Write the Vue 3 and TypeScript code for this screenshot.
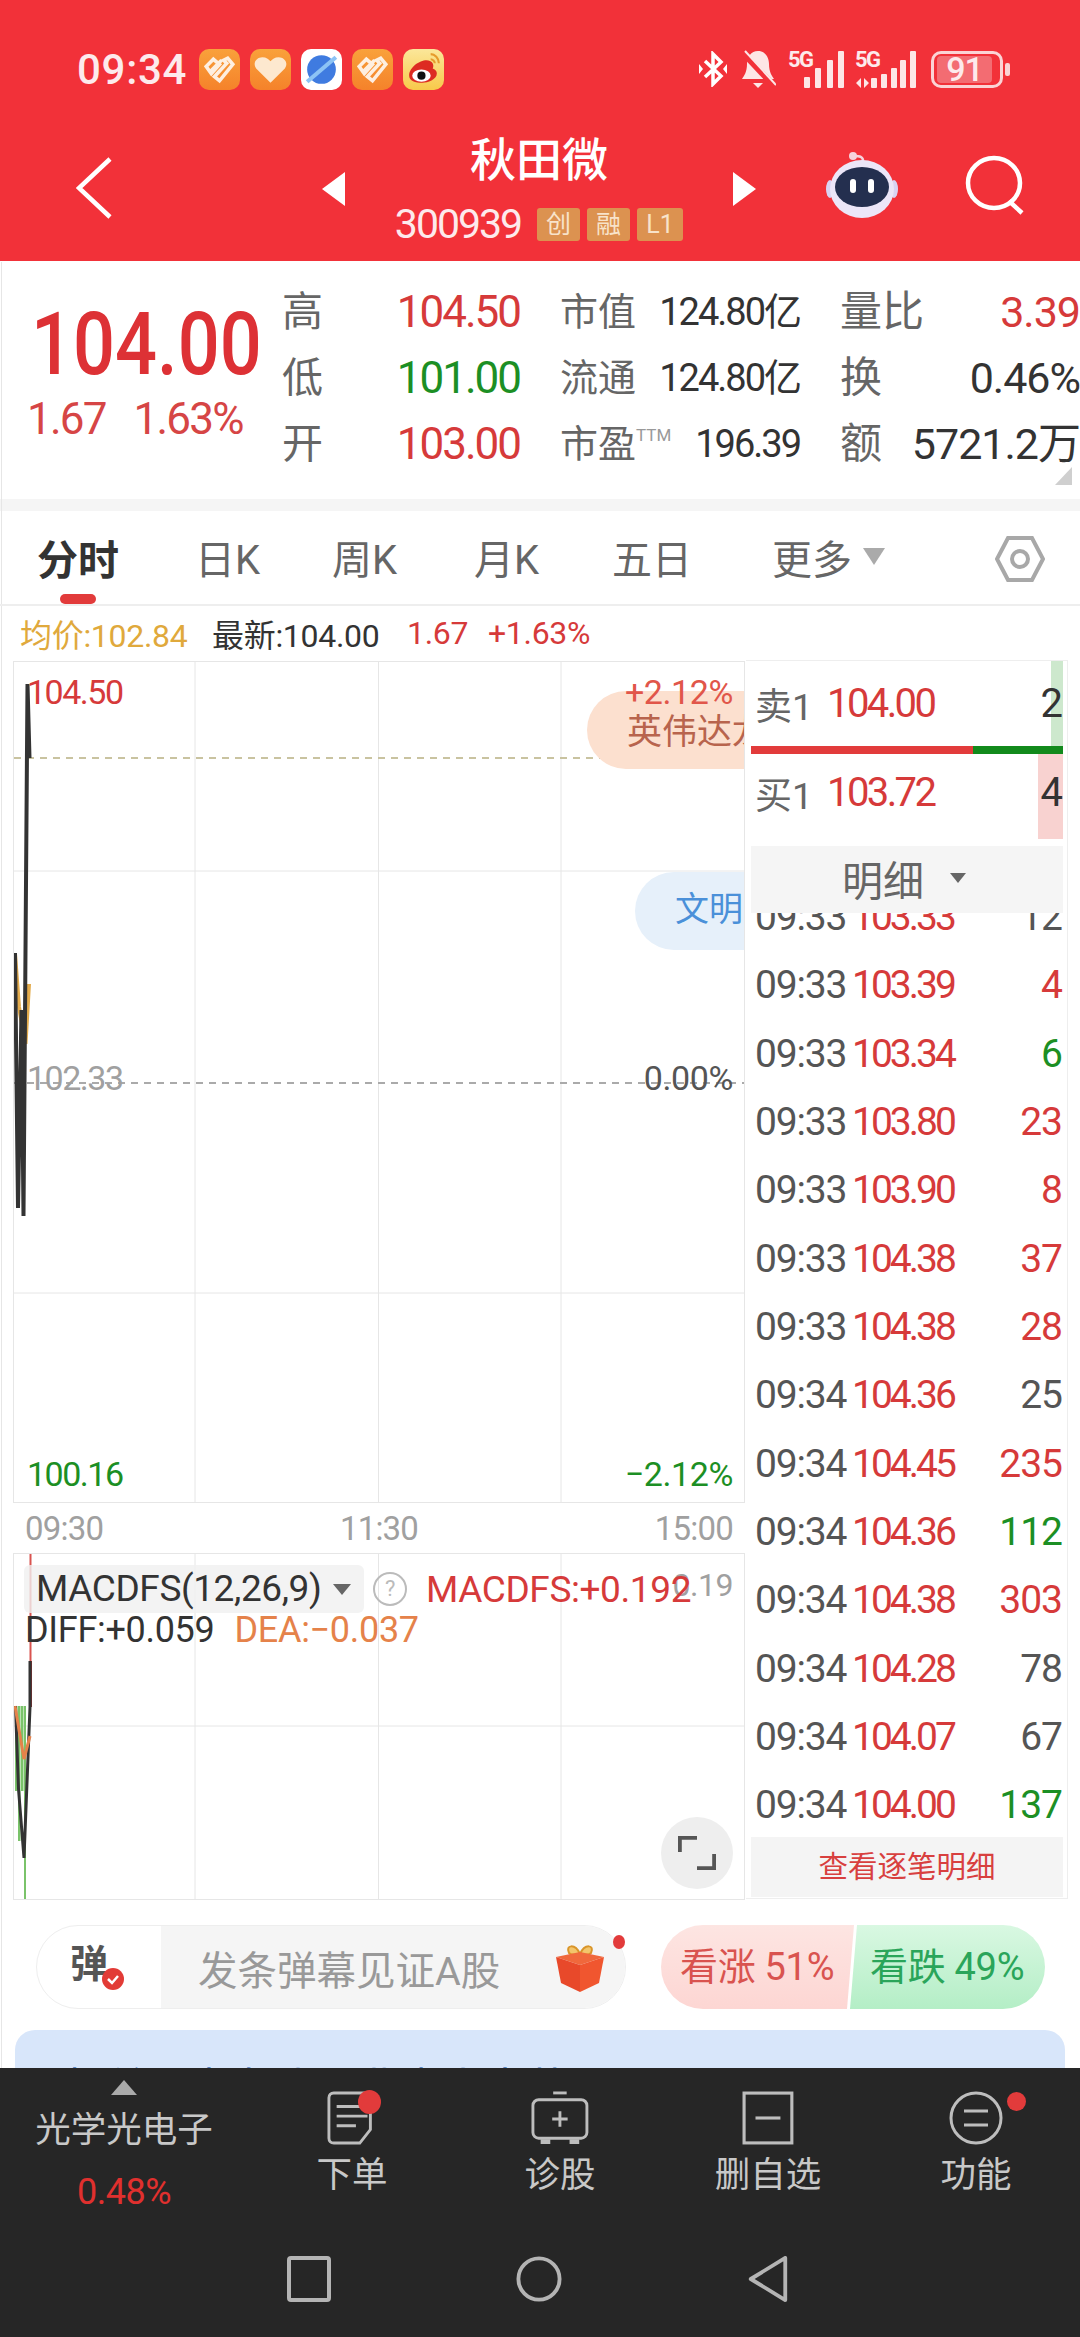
<template>
  <div class="page">
    <header class="head">
      <div class="status">
        <span class="clock">09:34</span>
        <div class="notif">
          <span v-for="(n, i) in notifs" :key="i" class="app" :class="n">
            <svg v-if="n === 'heart1'" viewBox="0 0 40 40"><path d="M7 17 14 10l6 5-8 9zM15 27l12-13-3-3 4-2 5 6-13 16zM12 21l10-10" fill="none" stroke="#fff" stroke-width="3.5" opacity=".85" /></svg>
            <svg v-else-if="n === 'heart2'" viewBox="0 0 40 40"><path d="M20 33 6 19c-4-6 1-11 6-11 4 0 6 2 8 4 2-2 4-4 8-4 5 0 10 5 6 11z" fill="#fde8cf" /></svg>
            <svg v-else-if="n === 'planet'" viewBox="0 0 40 40"><circle cx="20" cy="20" r="14" fill="#3f7be0" /><path d="M6 32 34 8" stroke="#8cc3f5" stroke-width="4" /></svg>
            <svg v-else viewBox="0 0 40 40"><path d="M6 26c0-8 10-15 17-15 5 0 8 4 6 8 3 1 4 3 4 5 0 6-9 9-14 9-7 0-13-2-13-7z" fill="#dd2b22" /><ellipse cx="18" cy="26" rx="9" ry="6" fill="#fff" /><circle cx="18" cy="26" r="4" fill="#111" /><path d="M27 5c4 0 8 4 8 9M27 10c2 0 4 2 4 4" fill="none" stroke="#e69b2c" stroke-width="2" /></svg>
          </span>
        </div>
        <div class="sys">
          <svg class="bt" viewBox="0 0 30 36"><path d="M7 10 23 25 15 33V3l8 8L7 26" fill="none" stroke="#fff" stroke-width="3.5" /><path d="M1 13l4 5-4 5zM29 13l-4 5 4 5z" fill="#fff" /></svg>
          <svg class="bell" viewBox="0 0 36 40"><path d="M18 2c-7 0-11 6-11 13 0 8-3 12-5 15h32c-2-3-5-7-5-15 0-7-4-13-11-13z" fill="#fde6e6" /><path d="M13 34h10l-5 5z" fill="#fde6e6" /><path d="M2 3 34 37" stroke="#f23139" stroke-width="6" /><path d="M5 2 36 36" stroke="#fde6e6" stroke-width="2" /></svg>
          <div class="sig">
            <span class="five">5G</span>
            <i v-for="h in [11, 20, 28, 37]" :key="h" class="bar" :style="{ height: h + 'px' }"></i>
          </div>
          <div class="sig sig2">
            <span class="five">5G</span>
            <svg class="arrows" viewBox="0 0 15 10"><path d="M6 0v10L1 5zM9 0v10l5-5z" fill="#fde6e6" /></svg>
            <i v-for="h in [10, 14, 20, 28, 37]" :key="h" class="bar" :style="{ height: h + 'px' }"></i>
          </div>
          <div class="batt"><span class="batt-in">91</span></div>
          <i class="nub"></i>
        </div>
      </div>
      <div class="nav">
        <svg class="back" viewBox="0 0 36 62"><path d="M34 2 3 31l31 29" fill="none" stroke="#fff" stroke-width="4.5" /></svg>
        <div class="stock">
          <i class="tri-l"></i>
          <div class="stock-mid">
            <div class="name">秋田微</div>
            <div class="code-line">
              <span class="code">300939</span>
              <span class="tag">创</span>
              <span class="tag">融</span>
              <span class="tag wide">L1</span>
            </div>
          </div>
          <i class="tri-r"></i>
        </div>
        <svg class="robot" viewBox="0 0 72 68"><path d="M37 12C38 5 33 5 28 5" fill="none" stroke="#f6d3dc" stroke-width="2.5" /><circle cx="27" cy="5" r="4" fill="#f6d3dc" /><ellipse cx="4" cy="38" rx="4" ry="9" fill="#d9d3f2" /><ellipse cx="68" cy="38" rx="4" ry="9" fill="#d9d3f2" /><ellipse cx="36" cy="38" rx="32" ry="29" fill="#ece6f8" /><ellipse cx="36" cy="36" rx="27" ry="20" fill="#242f4f" /><rect x="24" y="28" width="6" height="14" rx="3" fill="#fff" /><rect x="42" y="28" width="6" height="14" rx="3" fill="#fff" /></svg>
        <svg class="search" viewBox="0 0 60 60"><ellipse cx="29" cy="28" rx="26" ry="25" fill="none" stroke="#fff" stroke-width="4.5" /><path d="M44 46 57 58" stroke="#fff" stroke-width="4.5" /></svg>
      </div>
    </header>

    <section class="quote">
      <div class="price-box">
        <div class="big">104.00</div>
        <div class="chg"><span>1.67</span><span>1.63%</span></div>
      </div>
      <div class="stats">
        <template v-for="s in stats" :key="s.l1">
          <span class="lab">{{ s.l1 }}</span>
          <span class="val" :class="s.c1">{{ s.v1 }}</span>
          <span class="lab lab2">{{ s.l2 }}<sup v-if="s.sup">TTM</sup></span>
          <span class="val v2">{{ s.v2 }}</span>
          <span class="lab lab3">{{ s.l3 }}</span>
          <span class="val v3" :class="s.c3">{{ s.v3 }}</span>
        </template>
      </div>
      <i class="corner"></i>
    </section>
    <div class="band"></div>

    <nav class="tabs">
      <div v-for="t in tabs" :key="t.label" class="tab" :class="{ on: t.on }" :style="{ width: t.w + 'px' }">
        {{ t.label }}<i v-if="t.more" class="more"></i>
      </div>
      <svg class="hex" viewBox="0 0 50 46"><path d="M13 2h24l11 21-11 21H13L2 23z" fill="none" stroke="#a8a8a8" stroke-width="4" /><circle cx="25" cy="23" r="8" fill="none" stroke="#a8a8a8" stroke-width="4" /></svg>
    </nav>

    <div class="info">
      <span class="gold">均价:102.84</span>
      <span class="dark">最新:104.00</span>
      <span class="red">1.67</span>
      <span class="red">+1.63%</span>
    </div>

    <div class="market">
      <div class="charts">
        <div class="main-chart">
          <svg class="plot" viewBox="0 0 730 840">
            <path d="M181 0v840M364.500 0v840M547 0v840M0 209h730M0 631h730" stroke="#e6e6e6" stroke-width="1" fill="none" />
            <path d="M0 96h730" stroke="#c9c3a0" stroke-width="2" stroke-dasharray="7 6" fill="none" />
            <path d="M0 421h730" stroke="#aaa" stroke-width="2" stroke-dasharray="7 6" fill="none" />
            <path d="M1 292 5 345 11.500 382 15 322" stroke="#e3ab4c" stroke-width="4" fill="none" />
            <path d="M1 291 4 546 7.500 348 9.500 554 13.500 22 15.500 96" stroke="#333" stroke-width="4" fill="none" />
          </svg>
          <span class="pill orange">英伟达龙</span>
          <span class="pill blue">文明</span>
          <span class="lbl l-top red">104.50</span>
          <span class="lbl pct r-top">+2.12%</span>
          <span class="lbl l-mid grey">102.33</span>
          <span class="lbl pct r-mid dim">0.00%</span>
          <span class="lbl l-bot green">100.16</span>
          <span class="lbl pct r-bot green">−2.12%</span>
        </div>
        <div class="axis"><span>09:30</span><span>11:30</span><span>15:00</span></div>
        <div class="macd">
          <svg class="plot" viewBox="0 0 730 345">
            <path d="M181 0v345M364.500 0v345M547 0v345M0 172h730" stroke="#e6e6e6" stroke-width="1" fill="none" />
            <path d="M16.500 0v107" stroke="#d9534f" stroke-width="2" fill="none" />
            <path d="M16.500 107v46" stroke="#8a2c2c" stroke-width="3" fill="none" />
            <path d="M1 152h2.500v85H1zM4 152h2.500v135H4zM7 152h2.500v85H7zM10 152h2v193h-2z" fill="#7ac36a" />
            <path d="M16 107v46L10 304 4.500 235 1.500 152" stroke="#333" stroke-width="3" fill="none" />
            <path d="M1 152 10 205 16 182" stroke="#e5824a" stroke-width="3" fill="none" />
          </svg>
          <span class="lbl m-19 grey">0.19</span>
          <div class="macd-top">
            <div class="chip">MACDFS(12,26,9)<i class="chip-tri"></i></div>
            <span class="ques">?</span>
            <span class="m-red">MACDFS:+0.192</span>
          </div>
          <div class="macd-sub">
            <span>DIFF:+0.059</span>
            <span class="m-org">DEA:−0.037</span>
          </div>
          <button class="expand">
            <svg viewBox="0 0 40 40"><path d="M2 19V4h18M38 21v15H20" fill="none" stroke="#555" stroke-width="4" /></svg>
          </button>
        </div>
      </div>

      <aside class="side">
        <div class="book sell">
          <i class="vol vol-g"></i>
          <span class="bk-lab">卖1</span><span class="bk-price">104.00</span><span class="bk-qty">2</span>
        </div>
        <div class="split"><i class="split-r"></i><i class="split-g"></i></div>
        <div class="book buy">
          <i class="vol vol-r"></i>
          <span class="bk-lab">买1</span><span class="bk-price">103.72</span><span class="bk-qty">4</span>
        </div>
        <div class="detail">明细<i class="detail-tri"></i></div>
        <div class="ticks">
          <div class="ticks-in">
            <div v-for="(r, i) in ticks" :key="i" class="tick">
              <span class="t">{{ r.t }}</span>
              <span class="p">{{ r.p }}</span>
              <span class="q" :class="r.c">{{ r.q }}</span>
            </div>
          </div>
        </div>
        <div class="all">查看逐笔明细</div>
      </aside>
    </div>

    <div class="actions">
      <div class="barrage">
        <div class="bar-left">
          <span class="dan">弹</span>
          <svg class="check" viewBox="0 0 24 24"><circle cx="12" cy="12" r="11" fill="#e23b36" /><path d="M7 12l4 4 6-7" fill="none" stroke="#fff" stroke-width="2.500" /></svg>
        </div>
        <div class="bar-right">
          <span>发条弹幕见证A股</span>
          <svg class="gift" viewBox="0 0 50 50"><path d="M25 12C20 1 10 3 14 11c2 2 7 2 11 1zM25 12c5-11 15-9 11-1-2 2-7 2-11 1z" fill="#f3c56b" stroke="#d9952a" stroke-width="2" /><path d="M1 15 25 10l24 5-24 8z" fill="#f0683c" /><path d="M1 15l24 8v27L6 41z" fill="#e8492a" /><path d="M49 15 25 23v27l19-9z" fill="#f0562f" /></svg>
        </div>
        <i class="dot"></i>
      </div>
      <div class="vote">
        <div class="up">看涨 51%</div>
        <div class="down">看跌 49%</div>
      </div>
    </div>

    <div class="news">
      <div class="news-line">相关股为龙头，业内人士共识</div>
    </div>

    <footer class="dock">
      <div class="dock-row">
        <div class="sector">
          <i class="sec-up"></i>
          <div class="sec-name">光学光电子</div>
          <div class="sec-pct">0.48%</div>
        </div>
        <div class="dock-items">
          <div class="dock-item">
            <svg viewBox="0 0 52 56"><path d="M7 2h38v38L34 54H7c-3 0-5-2-5-5V7c0-3 2-5 5-5z" fill="none" stroke="#bdbdbd" stroke-width="3" /><path d="M10 16h26M10 26h32M10 36h20" stroke="#bdbdbd" stroke-width="3" /></svg>
            <i class="badge b1"></i>
            <span>下单</span>
          </div>
          <div class="dock-item">
            <svg viewBox="0 0 60 56"><path d="M23 2h14" stroke="#bdbdbd" stroke-width="3" /><rect x="2" y="9" width="56" height="40" rx="6" fill="none" stroke="#bdbdbd" stroke-width="3" /><path d="M30 21v16M22 29h16" stroke="#bdbdbd" stroke-width="3" /><path d="M10 50h10v5H10zM40 50h10v5H40z" fill="#bdbdbd" /></svg>
            <span>诊股</span>
          </div>
          <div class="dock-item">
            <svg viewBox="0 0 50 52"><rect x="2" y="2" width="46" height="48" fill="none" stroke="#bdbdbd" stroke-width="3" /><path d="M13 26h24" stroke="#bdbdbd" stroke-width="3" /></svg>
            <span>删自选</span>
          </div>
          <div class="dock-item">
            <svg viewBox="0 0 54 54"><ellipse cx="27" cy="27" rx="25" ry="25" fill="none" stroke="#bdbdbd" stroke-width="3" /><path d="M15 20h24M15 34h24" stroke="#bdbdbd" stroke-width="3" /></svg>
            <i class="badge b2"></i>
            <span>功能</span>
          </div>
        </div>
      </div>
      <div class="softkeys">
        <svg viewBox="0 0 44 46"><rect x="2" y="2" width="40" height="42" rx="2" fill="none" stroke="#b4b4b4" stroke-width="4" /></svg>
        <svg viewBox="0 0 48 48"><circle cx="24" cy="24" r="21.500" fill="none" stroke="#b4b4b4" stroke-width="4" /></svg>
        <svg viewBox="0 0 42 48"><path d="M39 2v44L3 24z" fill="none" stroke="#b4b4b4" stroke-width="4" stroke-linejoin="round" /></svg>
      </div>
    </footer>
  </div>
</template>

<script setup lang="ts">
const notifs = ['heart1', 'heart2', 'planet', 'heart1', 'weibo']

const stats = [
  { l1: '高', v1: '104.50', c1: 'red', l2: '市值', v2: '124.80亿', l3: '量比', v3: '3.39', c3: 'red', sup: false },
  { l1: '低', v1: '101.00', c1: 'green', l2: '流通', v2: '124.80亿', l3: '换', v3: '0.46%', c3: '', sup: false },
  { l1: '开', v1: '103.00', c1: 'red', l2: '市盈', v2: '196.39', l3: '额', v3: '5721.2万', c3: '', sup: true },
]

const tabs = [
  { label: '分时', w: 158, on: true },
  { label: '日K', w: 137 },
  { label: '周K', w: 142 },
  { label: '月K', w: 138 },
  { label: '五日', w: 160 },
  { label: '更多', w: 223, more: true },
]

const ticks = [
  { t: '09:33', p: '103.33', q: '12', c: '' },
  { t: '09:33', p: '103.39', q: '4', c: 'red' },
  { t: '09:33', p: '103.34', q: '6', c: 'green' },
  { t: '09:33', p: '103.80', q: '23', c: 'red' },
  { t: '09:33', p: '103.90', q: '8', c: 'red' },
  { t: '09:33', p: '104.38', q: '37', c: 'red' },
  { t: '09:33', p: '104.38', q: '28', c: 'red' },
  { t: '09:34', p: '104.36', q: '25', c: '' },
  { t: '09:34', p: '104.45', q: '235', c: 'red' },
  { t: '09:34', p: '104.36', q: '112', c: 'green' },
  { t: '09:34', p: '104.38', q: '303', c: 'red' },
  { t: '09:34', p: '104.28', q: '78', c: '' },
  { t: '09:34', p: '104.07', q: '67', c: '' },
  { t: '09:34', p: '104.00', q: '137', c: 'green' },
]
</script>

<style>
html,
body {
  margin: 0;
  background: #fff;
}
</style>

<style scoped>
.page {
  width: 1080px;
  height: 2337px;
  overflow: hidden;
  position: relative;
  font-family: Roboto, "Noto Sans CJK SC", sans-serif;
  background: #fff;
  color: #333;
}
.page::before {
  content: "";
  position: absolute;
  left: 1px;
  top: 262px;
  width: 1px;
  height: 1806px;
  background: #e6e6e6;
}
i {
  display: block;
}
.red {
  color: #d63a3a;
}
.green {
  color: #1c8f24;
}
.grey {
  color: #a0a0a0;
}
.dim {
  color: #555;
}

/* header */
.head {
  height: 261px;
  background: #f23139;
  color: #fff;
  box-sizing: border-box;
  padding-top: 48px;
}
.status {
  display: flex;
  align-items: center;
  height: 42px;
  padding-left: 77px;
}
.clock {
  font-size: 42px;
  font-weight: 500;
  width: 122px;
  letter-spacing: 0.7px;
  color: #fdeaec;
}
.notif {
  display: flex;
  gap: 10px;
}
.app {
  width: 41px;
  height: 41px;
  border-radius: 10px;
  background: linear-gradient(#f9a13b, #f5822a);
}
.app svg {
  display: block;
  width: 41px;
  height: 41px;
}
.app.planet {
  background: #fff;
}
.app.weibo {
  background: linear-gradient(#fbe79a, #f8c94a);
}
.sys {
  display: flex;
  align-items: center;
  margin-left: 254px;
}
.bt {
  width: 30px;
  height: 36px;
}
.bell {
  width: 36px;
  height: 40px;
  margin-left: 12px;
}
.sig {
  position: relative;
  display: flex;
  align-items: flex-end;
  gap: 5.500px;
  height: 38px;
  width: 56px;
  justify-content: flex-end;
  margin-left: 12px;
}
.sig2 {
  gap: 3.700px;
  margin-left: 11px;
  width: 61px;
}
.five {
  position: absolute;
  left: 0;
  top: 1px;
  font-size: 22px;
  font-weight: 700;
  line-height: 18px;
  letter-spacing: -1.500px;
  color: #fdeaec;
}
.arrows {
  position: absolute;
  left: 0;
  bottom: 0;
  width: 15px;
  height: 10px;
}
.bar {
  width: 6px;
  background: #fde6e6;
  border-radius: 1px;
}
.batt {
  width: 72px;
  height: 37px;
  box-sizing: border-box;
  border: 3px solid #fbd3d5;
  border-radius: 10px;
  padding: 2px 3px;
  margin-left: 15px;
}
.batt-in {
  display: block;
  height: 27px;
  width: 55px;
  background: #f36c72;
  border-radius: 4px;
  font-size: 34px;
  line-height: 27px;
  letter-spacing: -1px;
  text-align: center;
  font-weight: 500;
  color: #fdeaec;
}
.nub {
  width: 5px;
  height: 13px;
  margin-left: 2px;
  background: #fbd3d5;
  border-radius: 2px;
}
.nav {
  display: flex;
  align-items: flex-start;
  padding-left: 76px;
  margin-top: 41px;
  position: relative;
}
.back {
  width: 36px;
  height: 62px;
  margin-top: 26px;
}
.stock {
  display: flex;
  align-items: flex-start;
  width: 434px;
  margin-left: 210px;
  justify-content: space-between;
}
.tri-l,
.tri-r {
  width: 0;
  height: 0;
  margin-top: 41px;
  border-top: 17px solid transparent;
  border-bottom: 17px solid transparent;
}
.tri-l {
  border-right: 23px solid #fff;
}
.tri-r {
  border-left: 23px solid #fff;
}
.stock-mid {
  display: flex;
  flex-direction: column;
  align-items: center;
  margin-top: 2px;
}
.name {
  font-size: 46px;
  line-height: 54px;
  font-weight: 500;
}
.code-line {
  display: flex;
  align-items: center;
  gap: 7px;
  margin-top: 20px;
}
.code {
  font-size: 41px;
  line-height: 34px;
  letter-spacing: -2px;
  margin-right: 9px;
  color: #fdeaec;
}
.tag {
  width: 43px;
  height: 33px;
  background: #dc9250;
  color: #f8e3ca;
  border-radius: 3px;
  font-size: 25px;
  line-height: 33px;
  text-align: center;
}
.tag.wide {
  width: 46px;
}
.robot {
  width: 72px;
  height: 68px;
  position: absolute;
  left: 826px;
  top: 20px;
}
.search {
  width: 60px;
  height: 60px;
  position: absolute;
  left: 965px;
  top: 24px;
}

/* quote */
.quote {
  height: 238px;
  position: relative;
  display: flex;
  box-sizing: border-box;
  padding: 16px 0 0 0;
}
.price-box {
  width: 282px;
  padding-left: 27px;
  box-sizing: border-box;
  flex: none;
}
.big {
  font-size: 87px;
  font-weight: 500;
  line-height: 84px;
  margin-top: 25px;
  margin-left: 4px;
  white-space: nowrap;
  transform: scaleX(0.85);
  transform-origin: left;
  color: #dd3135;
}
.chg {
  display: flex;
  gap: 28px;
  font-size: 44px;
  line-height: 48px;
  letter-spacing: -1.800px;
  margin-top: 9px;
  color: #d64545;
}
.stats {
  flex: 1;
  display: grid;
  grid-template-columns: 40px 198px 118px 162px 90px 190px;
  grid-template-rows: repeat(3, 66px);
  align-items: center;
  margin-top: 2px;
}
.lab {
  font-size: 41px;
  line-height: 66px;
  color: #666;
  white-space: nowrap;
}
.lab sup {
  font-size: 17px;
  vertical-align: 16px;
  line-height: 0;
  color: #999;
}
.val {
  font-size: 44px;
  line-height: 66px;
  text-align: right;
  letter-spacing: -2px;
  white-space: nowrap;
}
.lab2 {
  font-size: 38px;
  padding-left: 40px;
}
.lab3 {
  font-size: 42px;
  padding-left: 40px;
}
.v2 {
  font-size: 38px;
  color: #333;
  letter-spacing: -2px;
}
.v3 {
  font-size: 43px;
  color: #333;
  letter-spacing: -1px;
}
.v3.red {
  color: #d63a3a;
}
.corner {
  position: absolute;
  right: 8px;
  bottom: 14px;
  width: 0;
  height: 0;
  border-left: 17px solid transparent;
  border-bottom: 18px solid #cfcfcf;
}
.band {
  height: 12px;
  background: #f5f5f5;
}

/* tabs */
.tabs {
  display: flex;
  align-items: center;
  height: 95px;
  padding: 0 0 0 37px;
  position: relative;
  border-bottom: 2px solid #eee;
  box-sizing: border-box;
}
.tab {
  font-size: 40px;
  color: #666;
  display: flex;
  align-items: center;
  position: relative;
  flex: none;
  margin-top: -2px;
}
.tab.on {
  color: #333;
  font-weight: 700;
  font-size: 41px;
}
.tab.on::after {
  content: "";
  position: absolute;
  left: 23px;
  top: 67px;
  width: 36px;
  height: 10px;
  border-radius: 5px;
  background: #e23b3b;
}
.more {
  width: 0;
  height: 0;
  margin-left: 11px;
  border-left: 11px solid transparent;
  border-right: 11px solid transparent;
  border-top: 17px solid #aaa;
}
.hex {
  position: absolute;
  left: 995px;
  top: 25px;
  width: 50px;
  height: 46px;
}

/* info line */
.info {
  height: 54px;
  display: flex;
  align-items: center;
  padding-left: 20px;
  font-size: 32px;
  letter-spacing: -0.300px;
  white-space: nowrap;
}
.gold {
  color: #e0a93c;
  width: 192px;
}
.dark {
  color: #333;
  width: 195px;
}
.info .red:nth-child(3) {
  width: 81px;
}

/* charts */
.market {
  display: flex;
  align-items: flex-start;
  height: 1240px;
  margin-left: 13px;
}
.charts {
  width: 732px;
  flex: none;
  padding-top: 1px;
}
.main-chart {
  position: relative;
  height: 842px;
  border: 1px solid #e6e6e6;
  box-sizing: border-box;
  overflow: hidden;
}
.plot {
  position: absolute;
  left: 0;
  top: 0;
  width: 100%;
  height: 100%;
  display: block;
}
.lbl {
  position: absolute;
  font-size: 34px;
  line-height: 36px;
  letter-spacing: -1.500px;
  white-space: nowrap;
}
.pct {
  letter-spacing: -0.400px;
}
.l-top,
.l-mid,
.l-bot {
  left: 13px;
}
.r-top,
.r-mid,
.r-bot {
  right: 11px;
}
.l-top,
.r-top {
  top: 12px;
}
.l-mid,
.r-mid {
  top: 398px;
}
.l-bot,
.r-bot {
  top: 794px;
}
.r-top {
  color: #e1564a;
}
.pill {
  position: absolute;
  white-space: nowrap;
  right: 0;
  overflow: hidden;
  box-sizing: border-box;
  border-radius: 40px 0 0 40px;
}
.pill.orange {
  top: 29px;
  width: 157px;
  height: 78px;
  background: #fce0cf;
  color: #b8644d;
  font-size: 35px;
  padding: 20px 0 0 40px;
  line-height: 44px;
}
.pill.blue {
  top: 210px;
  width: 109px;
  height: 78px;
  background: #e6f0fa;
  color: #4a90d9;
  font-size: 34px;
  line-height: 74px;
  padding-left: 40px;
}
.axis {
  height: 50px;
  display: flex;
  justify-content: space-between;
  align-items: center;
  padding: 0 12px;
  font-size: 33px;
  letter-spacing: -0.800px;
  color: #a0a0a0;
}
.macd {
  position: relative;
  height: 347px;
  border: 1px solid #e6e6e6;
  box-sizing: border-box;
  overflow: hidden;
}
.m-19 {
  right: 11px;
  top: 13px;
  font-size: 32px;
  letter-spacing: -0.500px;
}
.macd-top {
  position: relative;
  display: flex;
  align-items: center;
  margin: 11px 0 0 10px;
  height: 48px;
  font-size: 37px;
  letter-spacing: -0.400px;
  white-space: nowrap;
}
.chip {
  width: 340px;
  height: 48px;
  padding-left: 12px;
  box-sizing: border-box;
  background: rgba(240, 240, 240, 0.8);
  border-radius: 6px;
  line-height: 48px;
  display: flex;
  align-items: center;
  color: #333;
  flex: none;
}
.chip-tri {
  width: 0;
  height: 0;
  margin-left: 12px;
  border-left: 9px solid transparent;
  border-right: 9px solid transparent;
  border-top: 11px solid #666;
}
.ques {
  width: 34px;
  height: 34px;
  margin-left: 9px;
  box-sizing: border-box;
  border: 2px solid #bbb;
  border-radius: 50%;
  font-size: 22px;
  line-height: 30px;
  text-align: center;
  color: #bbb;
  flex: none;
}
.m-red {
  margin-left: 19px;
  color: #d63a3a;
}
.macd-sub {
  position: relative;
  display: flex;
  gap: 20px;
  margin: -5px 0 0 11px;
  font-size: 36px;
  line-height: 44px;
  letter-spacing: -0.300px;
  color: #333;
  white-space: nowrap;
}
.m-org {
  color: #e5824a;
}
.expand {
  position: absolute;
  left: 647px;
  top: 263px;
  width: 72px;
  height: 72px;
  border: 0;
  padding: 17px;
  border-radius: 50%;
  background: #eee;
}
.expand svg {
  display: block;
  width: 38px;
  height: 38px;
}

/* right side */
.side {
  width: 322px;
  height: 1239px;
  box-sizing: border-box;
  border: 1px solid #eee;
  border-left: 0;
  padding: 0 4px 0 5px;
  display: flex;
  flex-direction: column;
  flex: none;
  margin-left: 1px;
}
.book {
  position: relative;
  display: flex;
  align-items: center;
  padding-left: 4px;
}
.sell {
  height: 85px;
}
.buy {
  height: 85px;
  padding-bottom: 8px;
  box-sizing: border-box;
}
.vol {
  position: absolute;
  right: 0;
}
.vol-g {
  top: 0;
  bottom: 0;
  width: 12px;
  background: #cde8cd;
}
.vol-r {
  top: 0;
  bottom: 0;
  width: 25px;
  background: #f8d2d0;
}
.bk-lab {
  position: relative;
  width: 72px;
  color: #666;
  font-size: 37px;
  flex: none;
}
.bk-price {
  position: relative;
  color: #d63a3a;
  font-size: 40px;
  letter-spacing: -2.600px;
}
.bk-qty {
  position: relative;
  margin-left: auto;
  font-size: 40px;
  color: #333;
}
.split {
  display: flex;
  height: 8px;
  flex: none;
}
.split-r {
  width: 222px;
  background: #e23b3b;
}
.split-g {
  flex: 1;
  background: #128a1c;
}
.detail {
  margin-top: 7px;
  height: 67px;
  background: #f5f5f5;
  display: flex;
  align-items: center;
  padding: 0 0 4px 91px;
  box-sizing: border-box;
  font-size: 41px;
  color: #666;
  flex: none;
}
.detail-tri {
  width: 0;
  height: 0;
  margin-left: 26px;
  border-left: 8px solid transparent;
  border-right: 8px solid transparent;
  border-top: 10px solid #666;
}
.ticks {
  height: 924px;
  overflow: hidden;
  flex: none;
}
.ticks-in {
  margin-top: -30px;
}
.tick {
  display: flex;
  align-items: center;
  height: 68.330px;
  padding: 0 1px 0 4px;
  font-size: 39px;
}
.t {
  width: 97px;
  color: #555;
  letter-spacing: -1.200px;
}
.p {
  color: #d63a3a;
  letter-spacing: -3px;
}
.q {
  margin-left: auto;
  color: #555;
  letter-spacing: -1px;
}
.q.red {
  color: #d63a3a;
}
.q.green {
  color: #1c8f24;
}
.all {
  height: 60px;
  background: #f4f4f4;
  color: #d8403f;
  font-size: 29.500px;
  line-height: 60px;
  text-align: center;
  flex: none;
}

/* barrage + vote */
.actions {
  display: flex;
  height: 84px;
  margin-top: 25px;
  padding-left: 36px;
}
.barrage {
  position: relative;
  width: 590px;
  display: flex;
  border: 1px solid #eee;
  box-sizing: border-box;
  border-radius: 42px;
  flex: none;
}
.bar-left {
  position: relative;
  width: 124px;
  display: flex;
  padding: 16px 0 0 33px;
  box-sizing: border-box;
}
.dan {
  font-size: 38px;
  font-weight: 700;
  line-height: 44px;
  color: #555;
}
.check {
  position: absolute;
  left: 64px;
  top: 41px;
  width: 24px;
  height: 24px;
}
.bar-right {
  flex: 1;
  display: flex;
  align-items: center;
  background: #f5f5f5;
  border-radius: 0 42px 42px 0;
  padding-left: 37px;
  font-size: 39.500px;
  color: #999;
}
.gift {
  width: 50px;
  height: 50px;
  margin-left: 55px;
}
.dot {
  position: absolute;
  left: 576px;
  top: 9px;
  width: 12px;
  height: 14px;
  border-radius: 50%;
  background: #e23b3b;
}
.vote {
  margin-left: 35px;
  width: 384px;
  display: flex;
  border-radius: 42px;
  overflow: hidden;
  font-size: 38px;
  letter-spacing: -0.300px;
  line-height: 84px;
  flex: none;
}
.up {
  width: 193px;
  background: linear-gradient(#fde5e2, #fdd6d3);
  color: #d9534f;
  padding-left: 19px;
  box-sizing: border-box;
  white-space: nowrap;
  clip-path: polygon(0 0, 100% 0, calc(100% - 7px) 100%, 0 100%);
}
.down {
  flex: 1;
  margin-left: -4px;
  background: linear-gradient(#d9f8e2, #b4eec6);
  color: #2aa55a;
  padding-left: 20px;
  white-space: nowrap;
  clip-path: polygon(7px 0, 100% 0, 100% 100%, 0 100%);
}

/* news card */
.news {
  margin: 21px 15px 0;
  height: 60px;
  border-radius: 20px 20px 0 0;
  background: #d8e6fa;
  padding: 34px 0 0 49px;
  box-sizing: border-box;
  font-size: 42px;
  line-height: 50px;
  color: #3b6fb5;
  white-space: nowrap;
}

/* dock */
.dock {
  position: absolute;
  left: 0;
  right: 0;
  bottom: 0;
  height: 269px;
  background: #262626;
  color: #c8c8c8;
}
.dock-row {
  display: flex;
  height: 168px;
}
.sector {
  width: 248px;
  flex: none;
  display: flex;
  flex-direction: column;
  align-items: center;
}
.sec-up {
  width: 0;
  height: 0;
  margin-top: 12px;
  border-left: 13px solid transparent;
  border-right: 13px solid transparent;
  border-bottom: 15px solid #aaa;
}
.sec-name {
  font-size: 35.500px;
  line-height: 44px;
  margin-top: 13px;
}
.sec-pct {
  font-size: 36px;
  line-height: 44px;
  margin-top: 18px;
  color: #e0302e;
  letter-spacing: -0.500px;
}
.dock-items {
  flex: 1;
  display: flex;
  padding-top: 23px;
}
.dock-item {
  position: relative;
  width: 208px;
  flex: none;
  display: flex;
  flex-direction: column;
  align-items: center;
  font-size: 35.500px;
  line-height: 40px;
}
.dock-item svg {
  height: 54px;
  margin-bottom: 10px;
}
.badge {
  position: absolute;
  border-radius: 50%;
  background: #e23b3b;
}
.b1 {
  left: 110px;
  top: -1px;
  width: 23px;
  height: 24px;
}
.b2 {
  left: 135px;
  top: 1px;
  width: 19px;
  height: 19px;
}
.softkeys {
  display: grid;
  grid-template-columns: 44px 48px 42px;
  column-gap: 184px;
  justify-content: start;
  padding: 20px 0 0 287px;
}
.softkeys svg {
  display: block;
  width: 100%;
  height: 46px;
}
</style>
